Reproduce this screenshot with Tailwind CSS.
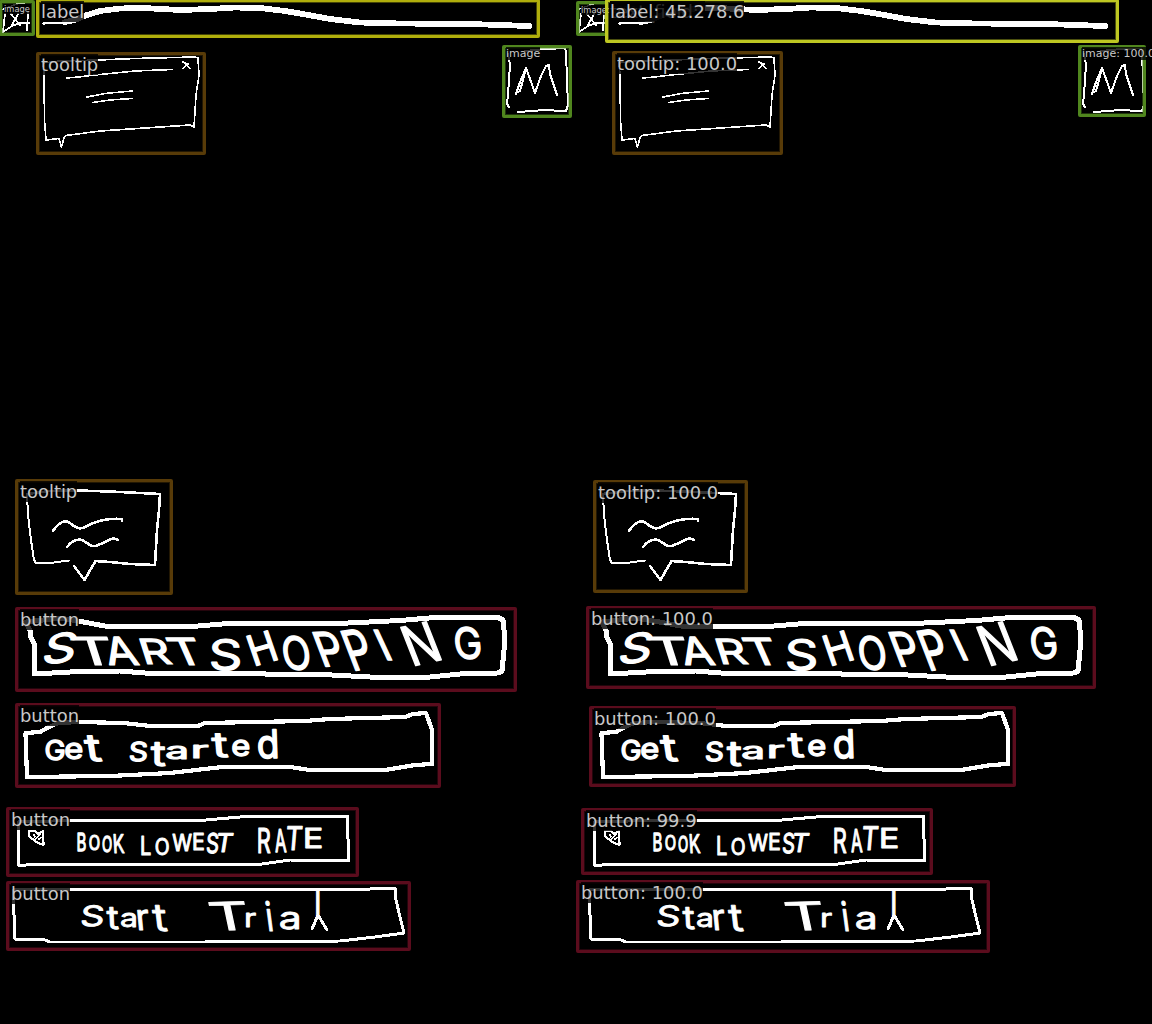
<!DOCTYPE html>
<html lang="en">
<head>
<meta charset="utf-8">
<title>Sketch element detection</title>
<script src="https://cdn.jsdelivr.net/npm/@tailwindcss/browser@4"></script>
</head>
<body class="bg-black">
<main class="relative grid h-[1024px] w-[1152px] grid-cols-2 overflow-hidden bg-black font-['DejaVu_Sans',sans-serif]">
  <svg class="block h-[1024px] w-[576px]" viewBox="0 0 576 1024">
    <g id="sketch" fill="none" stroke="#fff" stroke-linejoin="round" stroke-linecap="round">
      <g shape-rendering="crispEdges">
        <!-- picture placeholder, small -->
        <path stroke-width="1.8" d="M5 14L4 22L3 32L12 26L20 23L29 23M11 14L20 25M18 14L12 25M28 12L27 30"/>
        <path stroke-width="1.4" d="M3 9L17 4L31 2"/>
        <!-- text line -->
        <path stroke-width="2.2" d="M43 23.5L65 22.5"/>
        <path stroke-width="5.8" d="M65 22L75 20L84 16L100 11L120 8.5L143 8L180 10L210 9L235 7.5L260 8L285 11L300 13.5L330 19L360 22.5L400 23.5L470 24L529 26"/>
        <!-- tooltip with close mark -->
        <path stroke-width="1.6" d="M43 63L60 61L99 60L135 58.5L195 57L198 58L199 75L196 95L194 127L190 125L145 128L100 131L66 135.5L64 138L61.5 147L59 138.5L46 140L44.5 120L44 75L43 63M67 78L78 77L100 74.5L135 71L172 69.5M183 62L185 63L190 68.5M188 64L183 68.5M87 97L105 93.5L132 91M93 102.5L110 100L132 98.5"/>
        <!-- picture placeholder -->
        <path stroke-width="2" d="M508 54L510 65L509 80L508 95L507 104L509 107M525 51L540 49.5L565 48L566 52L567 80L568 105L566 111L562 111L545 110L518 112M516 94L520 82L526 68L523 80L520 91L516 93M526 68L530 79L535 93L541 76L546 66L549 65L550 74L557 95"/>
        <!-- speech bubble -->
        <path stroke-width="2" d="M27 494L28 515L31 540L34 560L36 563L50 563L69 560.5"/>
        <path stroke-width="2.6" d="M27 494L50 491L78 490.5L110 491.5L160 494L159 510L157 530L155 565L130 564L110 562L95.5 561L84.5 580L74 566M53 531C58 523 65 519 70 523C78 530 82 529 87 526C98 520 108 518 122 519V521M67 547C71 542 77 538 83 540.500C89 544 92 548 98 545C107 542 112 536 118 540"/>
        <!-- button outlines -->
        <path stroke-width="5" d="M26 622L60 618L78 621L105 626L198 626L222 624L338 623.5L400 620.5L435 617.5L498 617.5L503 620L505 640L502 671L498 673L460 674L430 677L370 677L332 675L268 674.5L260 673L145 673L120 671L70 672L34 674L34 643L30 636L31 633L26 622"/>
        <path stroke-width="4.2" d="M25.5 733L40 732L47 728L58 723L80 722L123 723L150 726L198 726L205 723L305 721L330 719L405 717L413 714L426 713L432 730L432 764L415 765L385 770L310 770L290 767L222 767L170 773L110 776L27 777Z"/>
        <path stroke-width="3" d="M18 822L70 820.5L200 820.5L240 817L347.500 816.500L348.500 861L290 860L262 864L30 864.500L19 866Z"/>
        <path stroke-width="3" d="M13 890L70 889.500L370 889L395 888L396 900L400 917L404 933L375 937L340 941L205 942L50 942L45 940L15 939Z"/>
        <!-- heart -->
        <path stroke-width="2.2" d="M29 836L29 831L35 831L38 834L43 831L43.500 845L36 842L29 836"/>
        <path stroke-width="1.5" d="M35 840L40 834M34 835L35 837M39 839L41 838"/>
        <!-- tail of the last letter in Trial -->
        <path stroke-width="3" d="M312 929L318 915L327 930"/>
      </g>
      <g id="writing" fill="#fff"></g>
    </g>
  </svg>
  <svg class="block h-[1024px] w-[576px]" viewBox="0 0 576 1024"><use href="#sketch"/></svg>
  <div id="boxes" class="absolute inset-0"></div>
</main>
<script>
// Each letter: character, bottom-left x and y, width, height, lean of the top, rise of the right side.
// Each group starts with how far its letters grow past those bounds, and the extra pen width.
const words = [
  [3.2, 1.3, [['S',44,663,25,28,8,-2],['T',82,663,32,25,-9,0],['A',111,663,27,25,-8,0],['R',149,662,22,22,-8,0],['T',179,663,25,24,-12,0],
    ['S',213,669,25,29,0,0],['H',258,664,18,26,-10,-6],['O',287,668,22,31,-4,1],['P',327,665,18,31,-13,-1],['P',357,669,17,36,-15,-3],
    ['I',389,658,1.5,27,-14,0],['N',417,664,23,35,-15,-6],['G',459,658,21,29,-4,-1]]],
  [2, 1.5, [['G',47,759,16,18,0,0],['e',67,758,14,14,0,0],['t',88,760,13,24,-4,0],['S',131,761,14,18,1,0],['t',152,765,12,22,0,0],
    ['a',168,758,17,11,0,0],['r',195,757,12,11,0,0],['t',214,756,13,22,-2,0],['e',234,755,14,14,0,0],['d',260,757,16,27,-1,0]]],
  [0.8, 1, [['B',78,851,7,17,0,0],['O',90,850,9,14,0,0],['O',103,852,8,15,0,0],['K',115,853,9,18,-1,0],
    ['L',142,855,8,18,0,0],['O',156,855,12,16,0,0],['W',173,851,18,16,0,0],['E',194,850,9,16,0,0],['S',207,853,10,20,1,0],['T',216,852,14,18,3,0],
    ['R',259,853,11,24,0,0],['A',276,852,10,22,-1,0],['T',286,850,14,23,2,0],['E',306,848,15,19,0,0]]],
  [1.4, 0.9, [['S',82,926,19,20,2,0],['t',108,929,10,21,-1,0],['a',122,927,13,13,0,0],['r',140,929,9,19,-2,0],['t',155,931,12,25,-3,0],
    ['T',215,930,34,27,-6,-1],['r',247,926,8,13,0,0],['i',270,930,2.5,29,-4,0],['a',281,929,17,16,0,0],['l',317,916,1.5,24,0,0]]]
];
const NS = 'http://www.w3.org/2000/svg', writing = document.getElementById('writing');
const ctx = document.createElement('canvas').getContext('2d');
ctx.font = '100px Inter, sans-serif';
for (const [grow, pen, letters] of words) for (const [c, x0, y0, w0, h0, lean, rise] of letters) {
  const x = x0 - grow / 2, y = y0 + grow / 2, w = w0 + grow, h = h0 + grow;
  const m = ctx.measureText(c);
  const l = -m.actualBoundingBoxLeft, gw = m.actualBoundingBoxRight - l;
  const d = m.actualBoundingBoxDescent, gh = m.actualBoundingBoxAscent + d;
  const a = w / gw, b = rise / gw, cc = -lean / gh, dd = h / gh;
  const t = document.createElementNS(NS, 'text');
  t.textContent = c;
  t.setAttribute('font-family', 'Inter, sans-serif');
  t.setAttribute('font-size', '100');
  t.setAttribute('stroke-width', pen / Math.sqrt(a * dd));
  t.setAttribute('transform', `matrix(${a} ${b} ${cc} ${dd} ${x - a * l - cc * d} ${y - b * l - dd * d})`);
  writing.appendChild(t);
}

// Detected regions: text, colour classes, outer left, top, right, bottom, font class, optional earlier text.
const G = 'border-[#50861e] outline-[#50861e]/40', Y = 'border-[#b0ae0c] outline-[#b0ae0c]/40', L = 'border-[#bec722] outline-[#bec722]/40';
const B = 'border-[#583b08] outline-[#583b08]/40', R = 'border-[#5b0c1d] outline-[#5b0c1d]/40';
const big = 'text-[17.9px] leading-[21px] left-[2px] top-[-1px]', mid = 'text-[11px] leading-[13px] left-[1px] top-[-1px]', tiny = 'text-[8.3px] leading-[10px] left-[2px] top-[1px]';
const boxes = [
  ['image',G,-1,0,35,36,tiny],['label',Y,36,-1,540,38,big],['tooltip',B,36,52,206,155,big],['image',G,502,45,572,118,mid],
  ['tooltip',B,15,479,173,595,big],['button',R,15,607,517,692,big],['button',R,15,703,441,788,big],['button',R,6,807,359,877,big],['button',R,6,881,411,951,big],
  ['image: 100.0',G,576,1,608,36,tiny],['label: 45.2',L,605,-1,1119,43,big,'text_field: 78.6'],['tooltip: 100.0',B,612,51,783,155,big],['image: 100.0',G,1078,45,1146,117,mid],
  ['tooltip: 100.0',B,593,480,748,593,big],['button: 100.0',R,586,606,1096,689,big],['button: 100.0',R,589,706,1016,787,big],['button: 99.9',R,581,808,933,875,big],['button: 100.0',R,576,880,990,953,big]
];
const root = document.getElementById('boxes');
for (const [text, colour, x0, y0, x1, y1, size, earlier] of boxes) {
  const box = document.createElement('div');
  box.className = 'absolute rounded-[2px] border-[3px] outline-1 outline-offset-[-4px] ' + colour;
  box.style.cssText = `left:${x0}px;top:${y0}px;width:${x1 - x0}px;height:${y1 - y0}px`;
  for (const s of earlier ? [earlier, text] : [text]) {
    const tag = document.createElement('span');
    tag.className = 'absolute whitespace-nowrap bg-black/80 text-[#c8c8c8] ' + size;
    tag.textContent = s;
    box.appendChild(tag);
  }
  root.appendChild(box);
}
</script>
</body>
</html>
